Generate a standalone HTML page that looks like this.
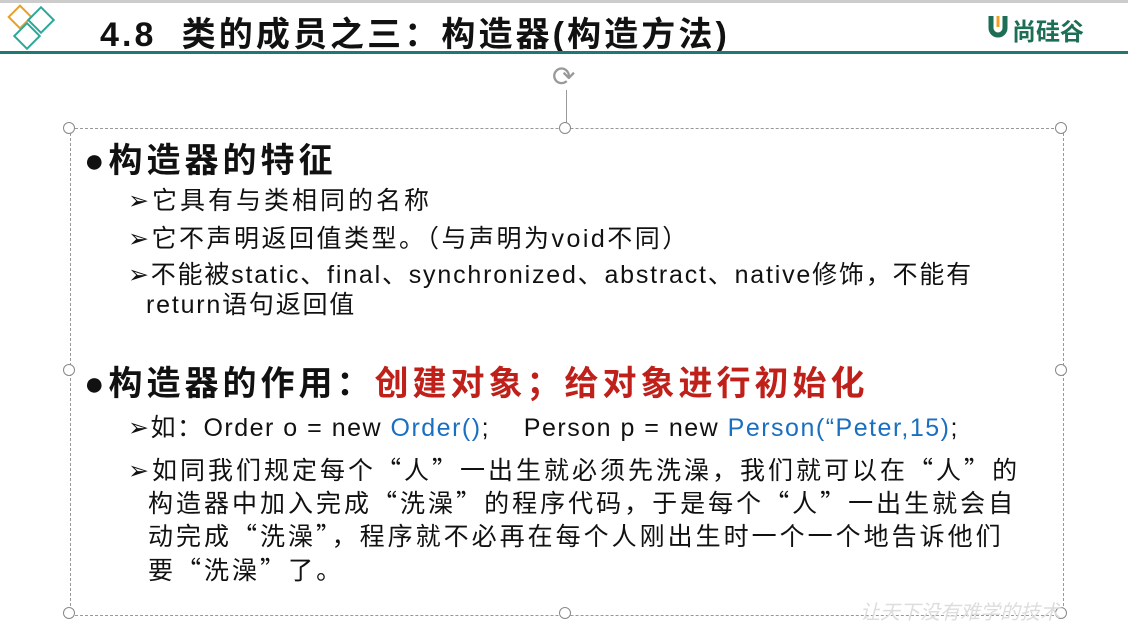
<!DOCTYPE html>
<html><head><meta charset="utf-8"><style>
body{margin:0;width:1128px;height:631px;background:#fff;position:relative;overflow:hidden;font-family:"Liberation Sans","Noto Sans CJK SC",sans-serif;color:#111}
.a{position:absolute;white-space:nowrap}
.h{font-size:34px;font-weight:bold;letter-spacing:4px}
.s{font-size:25px;letter-spacing:1.5px}
.p{font-size:25px;letter-spacing:3px}
.q{font-family:"Noto Sans CJK SC",sans-serif}
.hd{position:absolute;width:10px;height:10px;border:1.5px solid #888;border-radius:50%;background:#fff}
.blue{color:#1a6fc0}
</style></head><body>
<div style="position:absolute;left:0;top:0;width:1128px;height:3px;background:#ccc"></div>
<svg class="a" style="left:4px;top:3px" width="56" height="52">
<rect x="8" y="6" width="16" height="16" fill="none" stroke="#e8a02a" stroke-width="2" transform="rotate(45 16 14)"/>
<rect x="28" y="8" width="18" height="18" fill="none" stroke="#2aa89a" stroke-width="2" transform="rotate(45 37 17)"/>
<rect x="14" y="24" width="18" height="18" fill="none" stroke="#2aa89a" stroke-width="2" transform="rotate(45 23 33)"/>
</svg>
<div class="a" style="left:100px;top:7px;font-size:34px;font-weight:bold;letter-spacing:3.1px">4.8&nbsp; 类的成员之三：构造器(构造方法)</div>
<div style="position:absolute;left:0;top:51px;width:1128px;height:3px;background:#1e7a70"></div>
<svg class="a" style="left:988px;top:13px" width="20" height="26"><path d="M3 3 V15 A7 7 0 0 0 17 15 V3" fill="none" stroke="#1e6e55" stroke-width="5"/><path d="M10 3 V14" stroke="#f0a020" stroke-width="3"/></svg>
<div class="a" style="left:1012px;top:12px;font-size:24px;font-weight:bold;color:#1e6e55">尚硅谷</div>
<div style="position:absolute;left:70px;top:128px;width:992px;height:486px;border:1px dashed #999"></div>
<div style="position:absolute;left:566px;top:90px;width:1px;height:38px;background:#999"></div>
<div class="a" style="left:552px;top:60px;font-size:28px;color:#999">⟳</div>
<div class="hd" style="left:63px;top:122px"></div><div class="hd" style="left:559px;top:122px"></div><div class="hd" style="left:1055px;top:122px"></div>
<div class="hd" style="left:63px;top:364px"></div><div class="hd" style="left:1055px;top:364px"></div>
<div class="hd" style="left:63px;top:607px"></div><div class="hd" style="left:559px;top:607px"></div><div class="hd" style="left:1055px;top:607px"></div>
<div class="a h" style="left:84px;top:133px">●构造器的特征</div>
<div class="a s" style="left:128px;top:181px;letter-spacing:3px">➢它具有与类相同的名称</div>
<div class="a s" style="left:128px;top:219px;letter-spacing:2.5px">➢它不声明返回值类型。（与声明为void不同）</div>
<div class="a s" style="left:128px;top:255px;letter-spacing:1.8px">➢不能被static、final、synchronized、abstract、native修饰，不能有</div>
<div class="a s" style="left:146px;top:285px;letter-spacing:1.8px">return语句返回值</div>
<div class="a h" style="left:84px;top:356px">●构造器的作用：<span style="color:#c0201a">创建对象；给对象进行初始化</span></div>
<div class="a s" style="left:128px;top:408px">➢如：Order o = new <span class="blue">Order()</span>;&nbsp;&nbsp;&nbsp; Person p = new <span class="blue">Person(“Peter,15)</span>;</div>
<div class="a p" style="left:128px;top:451px">➢如同我们规定每个<span class="q">“</span>人<span class="q">”</span>一出生就必须先洗澡，我们就可以在<span class="q">“</span>人<span class="q">”</span>的</div>
<div class="a p" style="left:148px;top:484px">构造器中加入完成<span class="q">“</span>洗澡<span class="q">”</span>的程序代码，于是每个<span class="q">“</span>人<span class="q">”</span>一出生就会自</div>
<div class="a p" style="left:148px;top:517px">动完成<span class="q">“</span>洗澡<span class="q">”</span>，程序就不必再在每个人刚出生时一个一个地告诉他们</div>
<div class="a p" style="left:148px;top:551px">要<span class="q">“</span>洗澡<span class="q">”</span>了。</div>
<div class="a" style="left:860px;top:596px;font-size:20px;color:#ddd;font-style:italic">让天下没有难学的技术</div>
</body></html>
